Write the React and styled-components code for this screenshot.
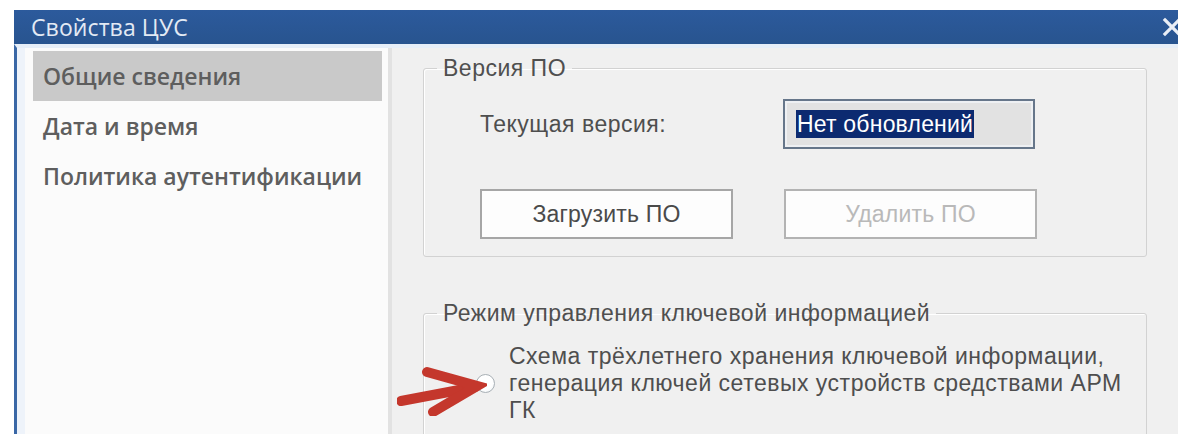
import React from "react";
import styled, { createGlobalStyle } from "styled-components";

const Global = createGlobalStyle`
  html, body { margin: 0; padding: 0; background: #ffffff; }
  body { overflow: hidden; }
  * { box-sizing: border-box; }
`;

const Page = styled.div`
  padding: 10px 0 0 14px;
  width: 1178px;
  height: 434px;
  overflow: hidden;
`;

const Window = styled.div`
  display: flex;
  flex-direction: column;
  width: 1164px;
  height: 424px;
  overflow: hidden;
  background: #f0f0f0;
`;

const TitleBar = styled.div`
  flex: 0 0 34px;
  display: flex;
  align-items: center;
  justify-content: space-between;
  padding-left: 17px;
  background: linear-gradient(#2c5a9c, #28548f);
`;

const Title = styled.span`
  font-family: "Open Sans", "Noto Sans", sans-serif;
  font-size: 23px;
  font-weight: 500;
  color: #e3eaf4;
  letter-spacing: 0.1px;
`;

const Close = styled.svg`
  margin-right: -6px;
  width: 24px;
  height: 24px;
`;

const Body = styled.div`
  flex: 1;
  display: flex;
  border-left: 3px solid #3a67a6;
  border-top: 4px solid #e6eef8;
  min-height: 0;
`;

const Sidebar = styled.nav`
  flex: 0 0 375px;
  display: flex;
  flex-direction: column;
  padding: 3px 6px 0 16px;
  background: #fbfbfb;
  border-right: 4px solid #e2e2e2;
  box-shadow: inset 8px 0 0 #eef3fa;
`;

const NavItem = styled.div`
  height: 50px;
  display: flex;
  align-items: center;
  padding-left: 10px;
  font-family: "Open Sans", "Noto Sans", sans-serif;
  font-size: 23px;
  font-weight: 600;
  color: #5e5e5e;
  background: ${(p) => (p.$active ? "#c9c9c9" : "transparent")};
`;

const Content = styled.main`
  position: relative;
  flex: 1;
  display: flex;
  flex-direction: column;
  padding-left: 31px;
  font-family: "Liberation Sans", Arial, sans-serif;
  font-size: 23px;
  color: #4e4e4e;
`;

const Group = styled.fieldset`
  margin: ${(p) => p.$top}px 0 0 0;
  padding: 0;
  width: 724px;
  border: 1px solid #d2d2d2;
  border-radius: 3px;
  box-shadow: inset 1px 1px 0 #ffffff;
  min-width: 0;
`;

const Legend = styled.legend`
  margin-left: 13px;
  padding: 0 6px;
  line-height: 26px;
  color: #4f4f4f;
  letter-spacing: 0.5px;
`;

const GroupInner = styled.div`
  display: flex;
  flex-direction: column;
  padding: ${(p) => p.$pad};
`;

const Row = styled.div`
  display: flex;
  align-items: center;
  gap: ${(p) => p.$gap || 0}px;
  margin-top: ${(p) => p.$mt || 0}px;
`;

const Label = styled.span`
  width: 303px;
  letter-spacing: 0.5px;
`;

const Field = styled.div`
  width: 252px;
  height: 50px;
  display: flex;
  align-items: center;
  padding-left: 11px;
  border: 2px solid #66768a;
  background: #e2e2e2;
  box-shadow: inset 0 0 0 2px #eef0f3;
`;

const Selected = styled.span`
  background: #0c2a70;
  color: #ffffff;
  line-height: 28px;
  padding: 0 1px;
  letter-spacing: 0.2px;
`;

const Button = styled.div`
  width: 253px;
  height: 50px;
  display: flex;
  align-items: center;
  justify-content: center;
  background: #fdfdfd;
  border: 2px solid ${(p) => (p.$disabled ? "#b3b3b3" : "#a6a6a6")};
  color: ${(p) => (p.$disabled ? "#b9b9b9" : "#4a4a4a")};
  letter-spacing: 0.2px;
`;

const Option = styled.div`
  display: flex;
  align-items: center;
  gap: 14px;
  margin-top: 17px;
  padding-left: 52px;
`;

const Radio = styled.span`
  flex: 0 0 19px;
  height: 19px;
  border-radius: 50%;
  border: 1.5px solid #a9b0b6;
  background: radial-gradient(circle at 45% 40%, #ffffff 55%, #e8eef2);
`;

const OptionText = styled.span`
  width: 632px;
  line-height: 27px;
  letter-spacing: 0.5px;
`;

const Arrow = styled.svg`
  position: absolute;
  left: 5px;
  top: 316px;
  width: 90px;
  height: 52px;
`;

export default function App() {
  return (
    <>
      <Global />
      <Page>
        <Window>
          <TitleBar>
            <Title>Свойства ЦУС</Title>
            <Close viewBox="0 0 24 24">
              <path d="M5 5 L19 19 M19 5 L5 19" stroke="#e9eef6" strokeWidth="3.2" strokeLinecap="square" />
            </Close>
          </TitleBar>
          <Body>
            <Sidebar>
              <NavItem $active>Общие сведения</NavItem>
              <NavItem>Дата и время</NavItem>
              <NavItem>Политика аутентификации</NavItem>
            </Sidebar>
            <Content>
              <Group $top={7}>
                <Legend>Версия ПО</Legend>
                <GroupInner $pad="18px 0 17px 56px">
                  <Row>
                    <Label>Текущая версия:</Label>
                    <Field>
                      <Selected>Нет обновлений</Selected>
                    </Field>
                  </Row>
                  <Row $mt={40} $gap={51}>
                    <Button>Загрузить ПО</Button>
                    <Button $disabled>Удалить ПО</Button>
                  </Row>
                </GroupInner>
              </Group>
              <Group $top={43}>
                <Legend>Режим управления ключевой информацией</Legend>
                <GroupInner $pad="0 0 40px 0">
                  <Option>
                    <Radio />
                    <OptionText>
                      Схема трёхлетнего хранения ключевой информации, генерация ключей сетевых устройств средствами АРМ ГК
                    </OptionText>
                  </Option>
                </GroupInner>
              </Group>
              <Arrow viewBox="0 0 90 52">
                <path d="M4 37 L78 23" stroke="#c4372c" strokeWidth="10" strokeLinecap="round" />
                <path d="M30 8 L80 22 L36 48" stroke="#c4372c" strokeWidth="10" fill="none" strokeLinecap="round" strokeLinejoin="miter" />
              </Arrow>
            </Content>
          </Body>
        </Window>
      </Page>
    </>
  );
}
